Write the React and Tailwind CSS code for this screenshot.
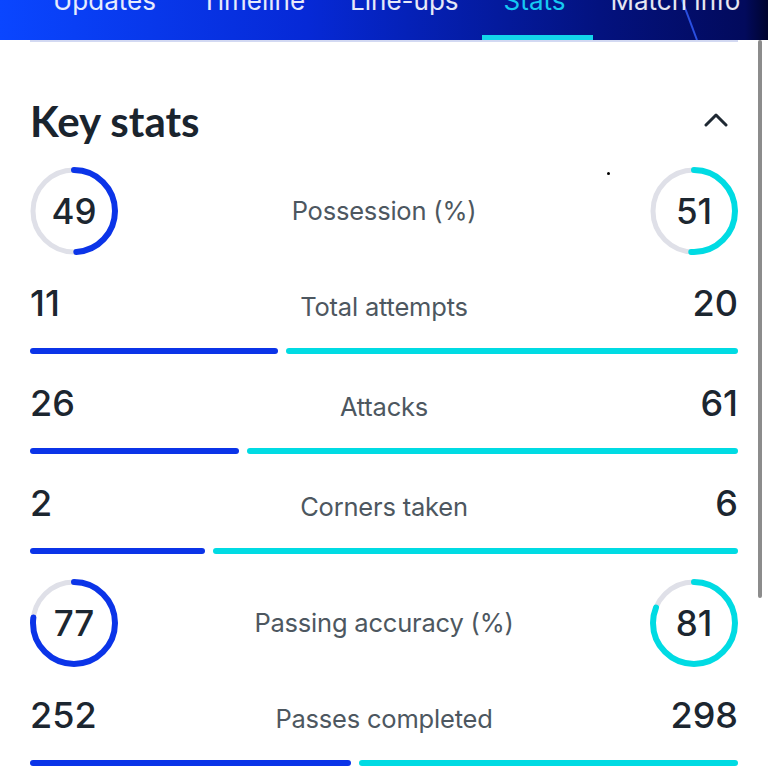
import React from "react";

const BLUE = "#0b34e8";
const CYAN = "#00dbe3";

const tabs = ["Updates", "Timeline", "Line-ups", "Stats", "Match info"];

const Ring = ({ value, color }) => {
  const r = 41;
  const c = 2 * Math.PI * r;
  return (
    <div className="relative w-[88px] h-[88px] flex items-center justify-center">
      <svg width="88" height="88" viewBox="0 0 88 88" className="absolute inset-0">
        <circle cx="44" cy="44" r={r} fill="none" stroke="#dfe0e8" strokeWidth="5" />
        <circle
          cx="44"
          cy="44"
          r={r}
          fill="none"
          stroke={color}
          strokeWidth="6"
          strokeLinecap="round"
          strokeDasharray={`${(c * value) / 100} ${c}`}
          transform="rotate(-90 44 44)"
        />
      </svg>
      <span className="relative text-[35px] leading-none font-medium text-[#1c2630]">{value}</span>
    </div>
  );
};

const RingRow = ({ left, right, label, className }) => (
  <div className={`grid grid-cols-[1fr_auto_1fr] items-center ${className}`}>
    <div className="flex justify-start">
      <Ring value={left} color={BLUE} />
    </div>
    <span className="text-[25.5px] text-[#4d5760] tracking-[-0.2px]">{label}</span>
    <div className="flex justify-end">
      <Ring value={right} color={CYAN} />
    </div>
  </div>
);

const StatRow = ({ left, right, label, className }) => (
  <div className={className}>
    <div className="grid grid-cols-[1fr_auto_1fr] items-baseline h-[44px]">
      <span className="text-[36px] leading-[44px] font-medium text-[#1c2630]">{left}</span>
      <span className="text-[25.5px] text-[#4d5760] tracking-[-0.2px]">{label}</span>
      <span className="text-[36px] leading-[44px] font-medium text-[#1c2630] text-right">{right}</span>
    </div>
    <div className="flex gap-[8px] mt-[23px]">
      <div className="h-[6px] rounded-full bg-[#0b34e8]" style={{ flexGrow: left, flexBasis: 0 }} />
      <div className="h-[6px] rounded-full bg-[#00dbe3]" style={{ flexGrow: right, flexBasis: 0 }} />
    </div>
  </div>
);

export default function App() {
  return (
    <div className="relative h-[768px] overflow-hidden bg-white font-['Inter',sans-serif]">
      {/* tab bar */}
      <div className="relative h-[40px] overflow-hidden bg-[linear-gradient(90deg,#0a46ff_0%,#0629d6_40%,#03127f_78%,#020a5c_97%,#00042e_100%)]">
        <svg className="absolute left-[680px] top-0" width="20" height="40">
          <line x1="2" y1="0" x2="17" y2="40" stroke="#2a4fe0" strokeWidth="2" />
        </svg>
        <div className="flex gap-[45px] pl-[53px] mt-[-12px]">
          {tabs.map((t) => (
            <div key={t} className="relative h-[52px] shrink-0">
              <span
                className={`block text-[26px] leading-[26px] whitespace-nowrap ${
                  t === "Stats" ? "text-[#16c9f2]" : "text-white/90"
                }`}
              >
                {t}
              </span>
              {t === "Stats" && (
                <div className="absolute bottom-0 -left-[22px] -right-[28px] h-[5px] bg-[#13d6ea]" />
              )}
            </div>
          ))}
        </div>
      </div>

      <div className="px-[30px]">
        <div className="h-[2px] bg-[#d3d9f2]" />

        <div className="flex items-center justify-between h-[48px] mt-[55px]">
          <h2 className="font-['Lato',sans-serif] font-bold text-[42px] leading-none text-[#1a242e]">
            Key stats
          </h2>
          <svg width="24" height="14" viewBox="0 0 24 14" className="mr-[10px] mt-[-2px]">
            <path d="M2 12 L12 2 L22 12" fill="none" stroke="#1f2933" strokeWidth="3" strokeLinecap="round" strokeLinejoin="round" />
          </svg>
        </div>

        <div className="relative">
          <span className="absolute left-[577px] top-[5px] w-[3px] h-[3px] rounded-full bg-black" />
          <RingRow left={49} right={51} label="Possession (%)" className="mt-[22px]" />
        </div>
        <StatRow left={11} right={20} label="Total attempts" className="mt-[26px]" />
        <StatRow left={26} right={61} label="Attacks" className="mt-[27px]" />
        <StatRow left={2} right={6} label="Corners taken" className="mt-[27px]" />
        <RingRow left={77} right={81} label="Passing accuracy (%)" className="mt-[25px]" />
        <StatRow left={252} right={298} label="Passes completed" className="mt-[26px]" />
      </div>

      {/* scrollbar */}
      <div className="absolute right-[6px] top-[40px] w-[4px] h-[558px] rounded-full bg-[#8c8c8c]" />
    </div>
  );
}
